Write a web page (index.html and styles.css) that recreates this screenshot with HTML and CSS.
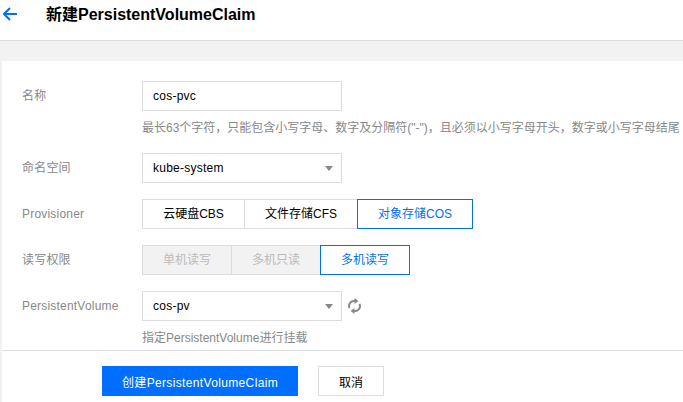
FILE: index.html
```html
<!DOCTYPE html>
<html lang="zh-CN">
<head>
    <meta charset="UTF-8">
    <title>新建PersistentVolumeClaim</title>
    <link rel="stylesheet" href="styles.css">
</head>
<body>
    <div class="header">
        <svg class="back" width="16" height="14" viewBox="0 0 16 14">
            <path d="M15 7H2M8 1L2 7l6 6" fill="none" stroke="#006eff" stroke-width="2"/>
        </svg>
        <h2>新建PersistentVolumeClaim</h2>
    </div>

    <div class="card">
        <div class="form">
            <div class="row">
                <label>名称</label>
                <div class="control">
                    <div class="input">cos-pvc</div>
                    <p class="help">最长63个字符，只能包含小写字母、数字及分隔符("-")，且必须以小写字母开头，数字或小写字母结尾</p>
                </div>
            </div>
            <div class="row">
                <label>命名空间</label>
                <div class="control">
                    <div class="input select">kube-system<i class="caret"></i></div>
                </div>
            </div>
            <div class="row">
                <label>Provisioner</label>
                <div class="control tabs">
                    <span class="tab w-cbs">云硬盘CBS</span>
                    <span class="tab w-cfs">文件存储CFS</span>
                    <span class="tab w-cos active">对象存储COS</span>
                </div>
            </div>
            <div class="row">
                <label>读写权限</label>
                <div class="control tabs">
                    <span class="tab w-rw disabled">单机读写</span>
                    <span class="tab w-rw disabled">多机只读</span>
                    <span class="tab w-rw3 active">多机读写</span>
                </div>
            </div>
            <div class="row">
                <label>PersistentVolume</label>
                <div class="control">
                    <div class="pv-line">
                        <div class="input select">cos-pv<i class="caret"></i></div>
                        <svg class="refresh" width="13" height="16" viewBox="0 0 13 16">
                            <path d="M1.5 10A5 5 0 0 1 7 3" fill="none" stroke="#888" stroke-width="2"/>
                            <path d="M11.5 6A5 5 0 0 1 6 13" fill="none" stroke="#888" stroke-width="2"/>
                            <path d="M6.5 0L10.5 3L6.5 6Z" fill="#888"/>
                            <path d="M6.5 16L2.5 13L6.5 10Z" fill="#888"/>
                        </svg>
                    </div>
                    <p class="help help-pv">指定PersistentVolume进行挂载</p>
                </div>
            </div>
        </div>
        <div class="footer">
            <button class="btn primary">创建PersistentVolumeClaim</button>
            <button class="btn">取消</button>
        </div>
    </div>
</body>
</html>
```

FILE: styles.css
```css
html, body {
    margin: 0;
    height: 100%;
    overflow: hidden;
}
body {
    background: #f2f2f2;
    font-family: "Liberation Sans", "Noto Sans CJK SC", sans-serif;
    font-size: 12px;
    color: #000;
}

.header {
    display: flex;
    align-items: center;
    box-sizing: content-box;
    height: 26px;
    padding: 0 0 14px 2px;
    background: #fff;
    border-bottom: 1px solid #ddd;
}
.back {
    margin-top: 2px;
}
.header h2 {
    margin: 0 0 0 28px;
    font-size: 16px;
    font-weight: bold;
}

.card {
    margin: 20px 0 0 2px;
    background: #fff;
    height: 341px;
}
.form {
    height: 289px;
    padding: 20px 0 0 20px;
    box-sizing: border-box;
    overflow: hidden;
}
.row {
    display: flex;
    margin-bottom: 16px;
}
.row label {
    width: 120px;
    height: 30px;
    flex: none;
    line-height: 31px;
    letter-spacing: 0.2px;
    color: #888;
}
.control {
    flex: none;
}

.input {
    position: relative;
    box-sizing: border-box;
    width: 200px;
    height: 30px;
    line-height: 28px;
    padding-left: 10px;
    letter-spacing: 0.25px;
    border: 1px solid #ddd;
    background: #fff;
}
.caret {
    position: absolute;
    top: 12px;
    right: 8px;
    border: 4px solid transparent;
    border-top: 5px solid #888;
    border-bottom: 0;
}
.help {
    margin: 8px 0 0;
    line-height: 18px;
    color: #888;
    white-space: nowrap;
}

.tabs {
    display: flex;
}
.tab {
    box-sizing: border-box;
    height: 30px;
    line-height: 28px;
    text-align: center;
    border: 1px solid #ddd;
    margin-right: -1px;
    background: #fff;
}
.w-cbs { width: 103px; }
.w-cfs { width: 114px; }
.w-cos { width: 116px; }
.w-rw { width: 90px; }
.w-rw3 { width: 90px; }
.tab.disabled {
    background: #f2f2f2;
    color: #bbb;
}
.tab.active {
    position: relative;
    border-color: #006eff;
    color: #006eff;
}

.pv-line {
    display: flex;
    align-items: center;
}
.refresh {
    margin-left: 6px;
}

.footer {
    display: flex;
    gap: 20px;
    padding: 15px 0 0 100px;
    border-top: 1px solid #dde1e3;
}
.btn {
    box-sizing: border-box;
    height: 30px;
    width: 66px;
    padding: 0;
    font-family: inherit;
    font-size: 12px;
    color: #000;
    background: #fff;
    border: 1px solid #ddd;
}
.btn.primary {
    width: 196px;
    letter-spacing: 0.35px;
    color: #fff;
    background: #006eff;
    border-color: #006eff;
}
```
